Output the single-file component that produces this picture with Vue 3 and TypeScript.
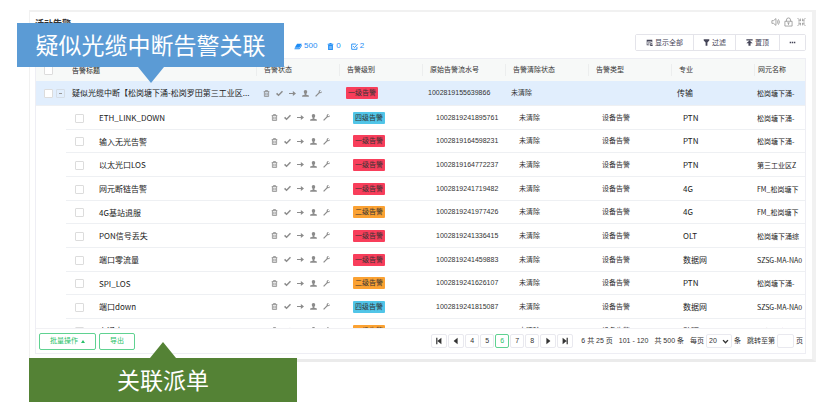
<script setup lang="ts">
import { ref } from 'vue'

type Level = 'critical' | 'major' | 'notice'
interface Alarm {
  title: string
  level: Level
  serial: string
  cleared: string
  type: string
  domain: string
  element: string
  parent?: boolean
}

const levelText: Record<Level, string> = {
  critical: '一级告警',
  major: '二级告警',
  notice: '四级告警',
}

const headers = ['告警状态', '告警级别', '原始告警流水号', '告警清除状态', '告警类型', '专业', '网元名称']

const child = (title: string, level: Level, serial: string, domain: string, element: string): Alarm => ({
  title, level, serial, domain, element, cleared: '未清除', type: '设备告警',
})

const alarms: Alarm[] = [
  {
    title: '疑似光缆中断【松岗塘下涌-松岗罗田第三工业区...',
    level: 'critical', serial: '1002819155639866', cleared: '未清除', type: '',
    domain: '传输', element: '松岗塘下涌-', parent: true,
  },
  child('ETH_LINK_DOWN', 'notice', '1002819241895761', 'PTN', '松岗塘下涌-'),
  child('输入无光告警', 'critical', '1002819164598231', 'PTN', '松岗塘下涌-'),
  child('以太光口LOS', 'critical', '1002819164772237', 'PTN', '第三工业区Z'),
  child('网元断链告警', 'critical', '1002819241719482', '4G', 'FM_松岗塘下'),
  child('4G基站退服', 'major', '1002819241977426', '4G', 'FM_松岗塘下'),
  child('PON信号丢失', 'critical', '1002819241336415', 'OLT', '松岗塘下涌综'),
  child('端口零流量', 'critical', '1002819241459883', '数据网', 'SZSG-MA-NA0'),
  child('SPI_LOS', 'major', '1002819241626107', 'PTN', '松岗塘下涌-'),
  child('端口down', 'notice', '1002819241815087', '数据网', 'SZSG-MA-NA0'),
  child('上通中', 'major', '1002819242829771', '动环', '设备环境'),
]

const pages = [4, 5, 6, 7, 8]
const current = ref(6)
const pageSize = ref('20')
</script>

<template>
  <main class="page">
    <section class="card">
      <header class="card-head">
        <h1>活动告警</h1>
        <div class="window-tools">
          <button type="button" aria-label="声音">
            <svg viewBox="0 0 10 10"><path d="M1 3.5h1.8L5.5 1.2v7.6L2.8 6.5H1zM7 3.2q1.4 1.8 0 3.6M8.2 2q2.4 3 0 6" /></svg>
          </button>
          <button type="button" aria-label="锁定">
            <svg viewBox="0 0 10 10"><path d="M1 4.200h8v5.300H1zM2.700 4.200V2.800a2.300 2.300 0 0 1 4.600 0v1.400M3.600 6h2.800M5 6v2.200" /></svg>
          </button>
          <button type="button" aria-label="退出全屏">
            <svg viewBox="0 0 10 10"><path d="M.6.6 3.6 3.6M1.2 3.8h2.6V1.2M9.4.6 6.4 3.6M8.8 3.8H6.2V1.2M.6 9.4l3-3M1.2 6.2h2.6v2.6M9.4 9.4l-3-3M8.8 6.2H6.2v2.6" /></svg>
          </button>
        </div>
      </header>

      <div class="toolbar">
        <ul class="counts">
          <li>
            <svg class="wide" viewBox="0 0 12 10"><path d="M4.6 1h7L8 7H1z" /><path d="M1 7.8h7l3.6-6v2.4L8.2 9H.6z" /></svg>500
          </li>
          <li>
            <svg viewBox="0 0 10 10"><path d="M3.5 0h3v1H9v1.4H1V1h2.500zM1.600 3h6.800v7H1.600z" /><path class="slits" d="M3.700 4.200v4.600M5 4.200v4.600M6.300 4.200v4.600" /></svg>0
          </li>
          <li>
            <svg class="line" viewBox="0 0 10 10"><path d="M8.500 5.500V9H1V1.500h6M3 4.500l2 2L9.500 1.500" /></svg>2
          </li>
        </ul>
        <div class="actions">
          <button type="button" class="all">
            <svg viewBox="0 0 10 10"><path d="M1 1h8v4H8V3.500H2V8h3v1H1zM3 4.500h4v1H3zM3 6.300h2v1H3zM6 6h3v1H7v1h2.500v2H6V9h2V8.800H6z" /></svg>显示全部
          </button>
          <button type="button" class="filter">
            <svg viewBox="0 0 10 10"><path d="M1 .5h8v1.500L6.300 5v4.500H3.700V5L1 2z" /></svg>过滤
          </button>
          <button type="button" class="top">
            <svg viewBox="0 0 10 10"><path d="M.5.500h9v1.500h-9zM5 2.200 9.500 6H6.500v3.800h-3V6h-3z" /></svg>置顶
          </button>
          <button type="button" class="more" aria-label="更多">
            <svg viewBox="0 0 10 10"><path d="M1 4h2v2H1zM4 4h2v2H4zM7 4h2v2H7z" /></svg>
          </button>
        </div>
      </div>

      <div class="panel">
        <div class="scroll">
          <table>
            <colgroup>
              <col class="c-title" />
              <col v-for="n in 6" :key="n" class="c-mid" />
              <col />
            </colgroup>
            <thead>
              <tr>
                <th scope="col">
                  <div class="name"><input type="checkbox" aria-label="全选" /><span>告警标题</span></div>
                </th>
                <th v-for="h in headers" :key="h" scope="col"><span class="head">{{ h }}</span></th>
              </tr>
            </thead>
            <tbody>
              <tr v-for="a in alarms" :key="a.serial" :class="{ parent: a.parent }">
                <td>
                  <div class="name">
                    <input type="checkbox" :aria-label="a.title" />
                    <button v-if="a.parent" type="button" class="toggle" aria-label="收起"></button>
                    <span>{{ a.title }}</span>
                  </div>
                </td>
                <td>
                  <div class="status">
                    <svg viewBox="0 0 10 10"><path class="o" d="M1 2.300h8M3.500 2V.8h3V2M2 2.500v6.700h6V2.500M4 4v4M6 4v4" /></svg>
                    <svg viewBox="0 0 10 10"><path d="M0 5.600 1.600 4 3.700 6 8.500 1 10 2.400 3.700 9z" /></svg>
                    <svg viewBox="0 0 10 10"><path d="M0 4.200h5.500V1.500L10 5 5.500 8.500V5.800H0z" /></svg>
                    <svg viewBox="0 0 10 10"><path d="M5 0c1.700 0 2.400 1.100 2.400 2.500S6.800 5 6.200 5.400v1.400L9.800 8v1.800H.2V8l3.600-1.200V5.400C3.200 5 2.600 3.900 2.600 2.500S3.300 0 5 0z" /></svg>
                    <svg viewBox="0 0 10 10"><path d="M8.300.2 6.800 1.800l.3 1.200 1.200.3L9.900 1.800C10.200 3.800 8.700 5.100 6.500 4.700L1.500 9.800.2 8.500l5-5C4.900 1.400 6.300-.2 8.300.2z" /></svg>
                  </div>
                </td>
                <td><span class="tag" :class="a.level">{{ levelText[a.level] }}</span></td>
                <td class="in">{{ a.serial }}</td>
                <td class="in">{{ a.cleared }}</td>
                <td class="in">{{ a.type }}</td>
                <td class="in domain">{{ a.domain }}</td>
                <td class="element">{{ a.element }}</td>
              </tr>
            </tbody>
          </table>
        </div>

        <footer>
          <button type="button" class="green">批量操作 <i class="caret"></i></button>
          <button type="button" class="green">导出</button>
          <nav class="pager" aria-label="分页">
            <button type="button" class="step" aria-label="首页">
              <svg viewBox="0 0 10 10"><path d="M1.500 1H3v8H1.500zM8 1v8L3 5z" /></svg>
            </button>
            <button type="button" class="step" aria-label="上一页">
              <svg viewBox="0 0 10 10"><path d="M7 1v8L2 5z" /></svg>
            </button>
            <button v-for="p in pages" :key="p" type="button" :class="{ on: p === current }" @click="current = p">{{ p }}</button>
            <button type="button" class="step" aria-label="下一页">
              <svg viewBox="0 0 10 10"><path d="M3 1v8l5-4z" /></svg>
            </button>
            <button type="button" class="step" aria-label="末页">
              <svg viewBox="0 0 10 10"><path d="M7 1h1.500v8H7zM2 1v8l5-4z" /></svg>
            </button>
          </nav>
          <div class="info">
            <span>6 共 25 页</span>
            <span>101 - 120</span>
            <span>共 500 条</span>
            <label class="field">每页
              <span class="select">
                <select v-model="pageSize"><option>20</option><option>50</option></select>
                <svg viewBox="0 0 10 10"><path d="M1.500 3 5 6.800 8.500 3" /></svg>
              </span>
              条</label>
            <label class="field">跳转至第 <input type="text" class="jump" /> 页</label>
          </div>
        </footer>
      </div>
    </section>

    <div class="callout blue">疑似光缆中断告警关联</div>
    <div class="callout olive">关联派单</div>
  </main>
</template>

<style>
body {
  background: #fff;
}
</style>

<style scoped>
.page {
  position: relative;
  padding: 10px 14px 54px 29px;
  font: 7px/10px "Liberation Sans", "Noto Sans CJK SC", sans-serif;
  color: #333;
}
.page * {
  box-sizing: border-box;
}
button,
input,
select {
  margin: 0;
  padding: 0;
  font: inherit;
  color: inherit;
  background: #fff;
  border: 1px solid #e9e9ef;
  border-radius: 2px;
  appearance: none;
}
button {
  display: flex;
  align-items: center;
  justify-content: center;
}
svg {
  display: block;
  flex: none;
  width: 8px;
  height: 8px;
  fill: currentColor;
}
.card {
  padding: 4px 6px 5px 5px;
  border: solid #f1f1f1;
  border-width: 2px 4px 3px 1px;
  border-bottom-color: #ebebeb;
}
.card-head {
  display: flex;
  justify-content: space-between;
  align-items: flex-start;
  height: 14px;
}
h1 {
  margin: 0;
  font: bold 9px/16px "Noto Sans CJK SC", sans-serif;
}
.window-tools {
  display: flex;
  gap: 4px;
  padding-top: 1px;
}
.window-tools button {
  border: 0;
}
.window-tools svg {
  width: 9px;
  height: 10px;
  fill: none;
  stroke: #888;
  stroke-width: 0.8;
}
.toolbar {
  display: flex;
  justify-content: space-between;
  align-items: center;
  padding: 4px 0 7px 259px;
}
.counts {
  display: flex;
  gap: 10px;
  margin: 0;
  padding: 7px 0 0;
  list-style: none;
  font-size: 8px;
  color: #1e8cf5;
}
.counts li {
  display: flex;
  align-items: center;
  gap: 2px;
}
.counts svg {
  width: 7px;
  height: 7px;
}
.counts .wide {
  width: 8px;
}
.counts .line {
  fill: none;
  stroke: currentColor;
  stroke-width: 1.3;
}
.slits {
  stroke: #fff;
  stroke-width: 0.5;
}
.actions {
  display: flex;
  border: 1px solid #e4e4ea;
  border-radius: 2px;
  color: #444457;
}
.actions button {
  gap: 2px;
  height: 15px;
  border: 0;
  border-left: 1px solid #e4e4ea;
  border-radius: 0;
}
.actions .all {
  width: 57px;
  border-left: 0;
}
.actions .filter {
  width: 42px;
}
.actions .top {
  width: 44px;
}
.actions .more {
  width: 26px;
}
.actions svg {
  width: 7px;
  height: 7px;
}
.panel {
  border: 1px solid #eeeef4;
}
.scroll {
  max-height: 269px;
  overflow: hidden;
}
table {
  width: 100%;
  table-layout: fixed;
  border-collapse: separate;
  border-spacing: 0;
}
.c-title {
  width: 220px;
}
.c-mid {
  width: 83px;
}
th,
td {
  padding: 0;
  font-weight: normal;
  text-align: left;
  white-space: nowrap;
}
th {
  height: 22px;
  background: #f7f9f8;
}
td {
  height: 24px;
  border-bottom: 1px solid #eef0f3;
}
tbody tr:nth-child(3n) td {
  height: 23px;
}
tbody tr.parent td {
  height: 25px;
  background: #e1eefd;
}
tbody tr:not(.parent) td:first-child {
  border-bottom: 0;
  background: linear-gradient(#eef0f3, #eef0f3) 30px 100% / 100% 1px no-repeat;
}
.head {
  display: block;
  padding-left: 7px;
  line-height: 12px;
  border-left: 1px solid #eceeee;
}
th:last-child .head {
  padding-left: 3px;
}
.name {
  display: flex;
  align-items: center;
  padding-left: 39px;
}
.name span {
  padding-left: 15px;
  font: 8px/12px "Noto Sans CJK SC", sans-serif;
  color: #222;
}
th .name,
.parent .name {
  padding-left: 8px;
}
th .name span {
  padding-left: 19px;
  font-size: 7px;
}
.parent .name span {
  padding-left: 7px;
}
.name input {
  width: 9px;
  height: 9px;
  border-color: #dcdcdc;
  border-radius: 1px;
}
.name input:checked {
  background: #1e8cf5;
}
.toggle {
  width: 9px;
  height: 9px;
  margin-left: 3px;
  background: transparent;
  border-color: #d5dde6;
  border-radius: 1px;
}
.toggle::before {
  content: "";
  width: 3px;
  height: 1px;
  background: #999;
}
.status {
  display: flex;
  gap: 6px;
  padding-left: 15px;
  color: #8c8c8c;
}
.parent .status {
  padding-left: 7px;
}
.status svg {
  width: 7px;
  height: 7px;
}
.o {
  fill: none;
  stroke: currentColor;
  stroke-width: 1.2;
}
.tag {
  display: block;
  width: 32px;
  margin-left: 14px;
  font-size: 7px;
  line-height: 12px;
  text-align: center;
  border-radius: 1px;
}
.parent .tag {
  margin-left: 7px;
}
.critical {
  background: #f83e5b;
}
.major {
  background: #fba233;
}
.notice {
  background: #51c5e8;
}
.in {
  padding-left: 14px;
}
.parent .in {
  padding-left: 6px;
}
.domain,
.element {
  font: 8px/12px "Noto Sans CJK SC", sans-serif;
  color: #222;
}
.in.domain {
  padding-left: 12px;
}
.parent .in.domain {
  padding-left: 6px;
}
.element {
  padding-left: 3px;
  font-size: 7px;
}
footer {
  display: flex;
  align-items: center;
  height: 25px;
  padding: 0 2px 0 3px;
  border-top: 1px solid #f1f1f4;
}
.green {
  gap: 3px;
  height: 17px;
  margin-right: 3px;
  padding: 0 10px;
  color: #28bf68;
  border-color: #5fd291;
}
.caret {
  border: solid transparent;
  border-width: 0 2px 3px;
  border-bottom-color: currentColor;
}
.pager {
  display: flex;
  gap: 1px;
  margin-left: auto;
}
.pager button {
  width: 14px;
  height: 14px;
}
.pager .step {
  width: 16px;
}
.pager .on {
  color: #28bf68;
  border-color: #5fd291;
}
.info {
  display: flex;
  align-items: center;
  gap: 6px;
  padding-left: 8px;
  white-space: nowrap;
}
.field {
  display: flex;
  align-items: center;
  gap: 2px;
}
.select {
  display: flex;
  align-items: center;
  width: 26px;
  height: 14px;
  padding: 0 2px;
  border: 1px solid #e9e9ef;
  border-radius: 2px;
}
.select select {
  flex: 1;
  min-width: 0;
  border: 0;
}
.select svg {
  width: 7px;
  height: 7px;
  fill: none;
  stroke: currentColor;
  stroke-width: 2;
  pointer-events: none;
}
.jump {
  width: 17px;
  height: 14px;
}
.callout {
  position: absolute;
  height: 44px;
  font: 23px/42px "Noto Sans CJK SC", sans-serif;
  text-align: center;
  color: #fff;
}
.callout::after {
  content: "";
  position: absolute;
  left: 50%;
  border: solid transparent;
  transform: translateX(-50%);
}
.blue {
  top: 23px;
  left: 17px;
  width: 267px;
  background: #5b9bd5;
}
.blue::after {
  top: 100%;
  border-width: 16px 13px 0;
  border-top-color: #5b9bd5;
}
.olive {
  top: 358px;
  left: 29px;
  width: 268px;
  background: #548235;
}
.olive::after {
  bottom: 100%;
  border-width: 0 13px 16px;
  border-bottom-color: #548235;
}
</style>
